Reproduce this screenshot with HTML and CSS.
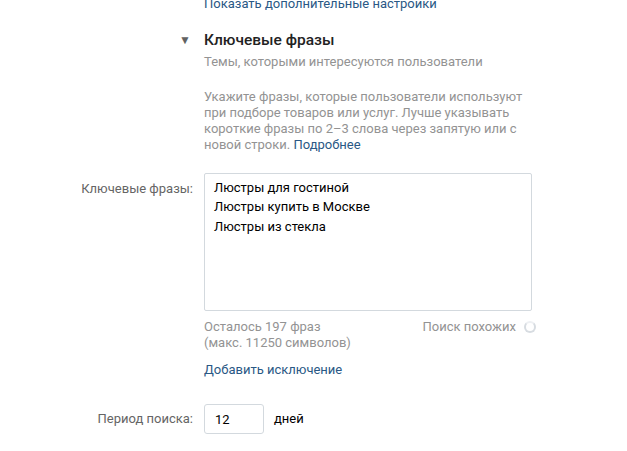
FILE: index.html
```html
<!DOCTYPE html>
<html lang="ru">
<head>
    <meta charset="UTF-8">
    <title>Ключевые фразы</title>
    <link rel="stylesheet" href="styles.css">
</head>
<body>
    <div class="settings">
        <div class="row more-row">
            <div class="row-label"></div>
            <a class="link" href="#">Показать дополнительные настройки</a>
        </div>

        <div class="row section-row">
            <div class="row-label"><span class="toggle">&#9660;</span></div>
            <div>
                <div class="section-title">Ключевые фразы</div>
                <div class="section-sub">Темы, которыми интересуются пользователи</div>
                <p class="hint">
                    Укажите фразы, которые пользователи используют
                    при подборе товаров или услуг. Лучше указывать
                    короткие фразы по 2–3 слова через запятую или с
                    новой строки. <a class="link" href="#">Подробнее</a>
                </p>
            </div>
        </div>

        <div class="row phrases-row">
            <label class="row-label field-label" for="phrases">Ключевые фразы:</label>
            <div class="field">
                <textarea id="phrases" class="phrases">Люстры для гостиной
Люстры купить в Москве
Люстры из стекла</textarea>
                <div class="phrases-meta">
                    <div class="counter">Осталось 197 фраз<br>(макс. 11250 символов)</div>
                    <div class="similar">
                        Поиск похожих
                        <span class="spinner"></span>
                    </div>
                </div>
                <a class="link add-exclude" href="#">Добавить исключение</a>
            </div>
        </div>

        <div class="row period-row">
            <label class="row-label field-label" for="period">Период поиска:</label>
            <div class="period">
                <input type="text" id="period" class="period-input" value="12">
                <span class="period-unit">дней</span>
            </div>
        </div>
    </div>
</body>
</html>
```

FILE: styles.css
```css
body {
    margin: 0;
    background-color: #fff;
    font-family: Roboto, "Open Sans", Arial, sans-serif;
    font-size: 13px;
    line-height: 16px;
    color: #000;
}

.settings {
    width: 627px;
}

.row {
    display: grid;
    grid-template-columns: 193px 328px;
    column-gap: 11px;
}

.row-label {
    text-align: right;
}

.field-label {
    color: #656565;
}

.link {
    color: #2a5885;
    text-decoration: none;
}

.more-row {
    margin-top: -4px;
}

/* collapsible section header */
.section-row {
    margin-top: 18px;
}

.toggle {
    display: inline-block;
    padding-right: 2px;
    font-size: 12px;
    line-height: 20px;
    color: #626262;
    vertical-align: top;
}

.section-title {
    font-weight: 500;
    font-size: 15.5px;
    line-height: 20px;
    color: #222;
}

.section-sub {
    margin-top: 4px;
    color: #939393;
}

.hint {
    margin: 19px 0 0;
    width: 330px;
    color: #939393;
}

/* phrases field */
.phrases-row {
    margin-top: 20px;
}

.phrases-row .field-label {
    padding-top: 8px;
}

.phrases {
    display: block;
    box-sizing: border-box;
    width: 328px;
    height: 138px;
    margin: 0;
    padding: 4px 9px;
    border: 1px solid #d3d9de;
    border-radius: 2px;
    font-family: inherit;
    font-size: 13px;
    line-height: 19.4px;
    color: #000;
    resize: none;
    outline: none;
}

.phrases-meta {
    display: flex;
    justify-content: space-between;
    margin-top: 8px;
    color: #939393;
}

.similar {
    display: flex;
    align-items: flex-start;
    gap: 8px;
    margin-right: -4px;
}

.spinner {
    display: inline-block;
    box-sizing: border-box;
    width: 12px;
    height: 12px;
    margin-top: 2px;
    border: 2px solid #d7dce1;
    border-top-color: #eef0f3;
    border-radius: 50%;
}

.add-exclude {
    display: inline-block;
    margin-top: 11px;
}

/* search period */
.period-row {
    margin-top: 26px;
    align-items: center;
}

.period {
    display: flex;
    align-items: center;
    gap: 10px;
}

.period-input {
    box-sizing: border-box;
    width: 60px;
    height: 30px;
    margin: 0;
    padding: 0 10px;
    border: 1px solid #d3d9de;
    border-radius: 3px;
    font-family: inherit;
    font-size: 13px;
    color: #000;
    outline: none;
}

.period-unit {
    color: #000;
}
```
